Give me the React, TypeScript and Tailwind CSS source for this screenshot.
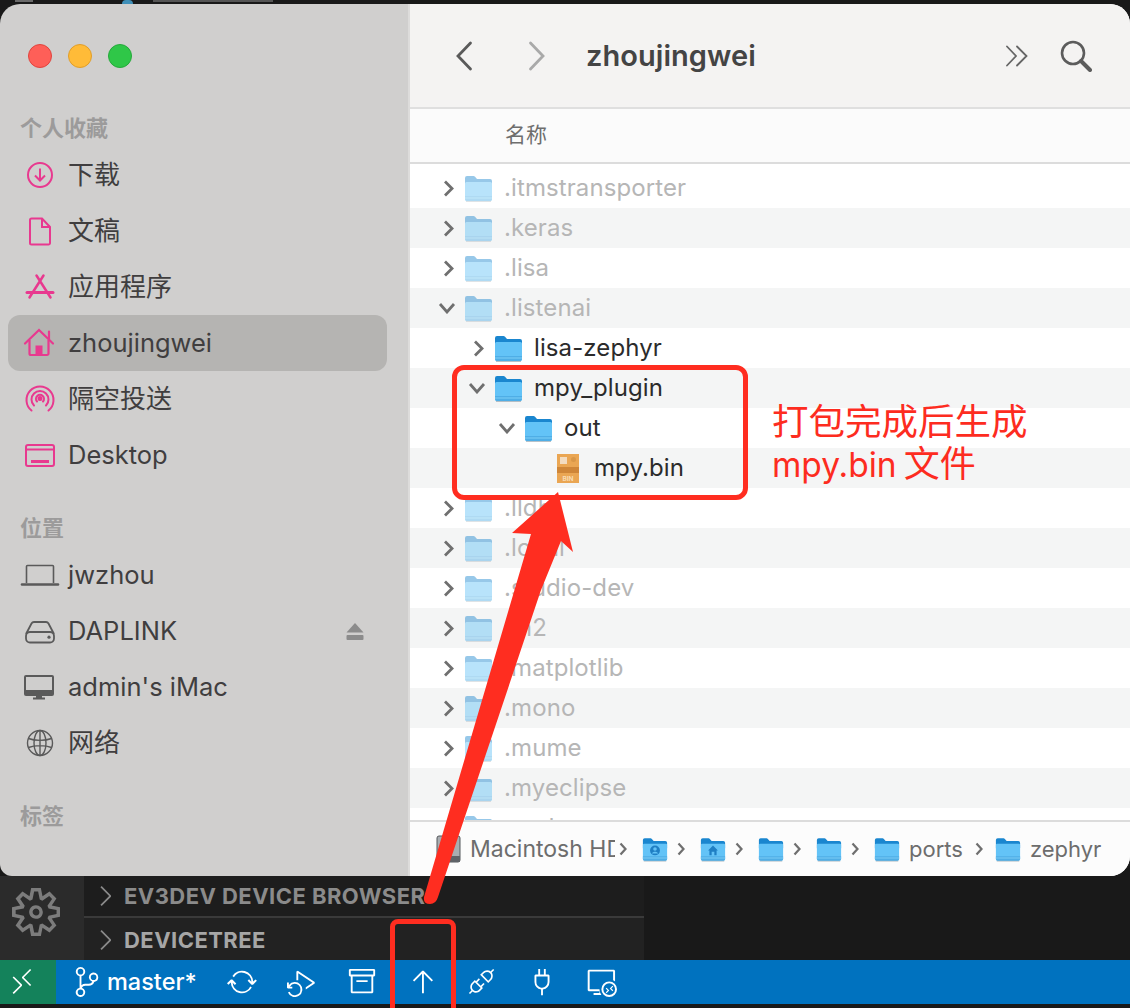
import React from "react";
import {
  VscArchive,
  VscArrowUp,
  VscChevronRight,
  VscDebugDisconnect,
  VscDebugRerun,
  VscPlug,
  VscRemote,
  VscRemoteExplorer,
  VscSettingsGear,
  VscSourceControl,
  VscSync,
} from "react-icons/vsc";

type Glyph = "user" | "home";

function Folder({ faded, small, glyph }: { faded?: boolean; small?: boolean; glyph?: Glyph }) {
  return (
    <svg
      viewBox="0 0 29 27"
      className={`${small ? "w-[26px] h-[25px]" : "w-[29px] h-[27px]"} shrink-0 ${faded ? "opacity-45" : ""}`}
    >
      <path d="M1 3a2 2 0 0 1 2-2h6.500a2 2 0 0 1 1.500.7L13 4h13a2 2 0 0 1 2 2v6H1z" fill="#1a86cf" />
      <path d="M1 8.500a1.500 1.500 0 0 1 1.500-1.500h24a1.500 1.500 0 0 1 1.500 1.500V24a2 2 0 0 1-2 2H3a2 2 0 0 1-2-2z" fill="#63c3f7" />
      <path d="M1 21h27v3a2 2 0 0 1-2 2H3a2 2 0 0 1-2-2z" fill="#4faee6" />
      <path d="M1 23h27" stroke="#7fd0f8" strokeWidth="1" />
      <path d="M2 26.500h25" stroke="#8a9aa6" strokeWidth="1" opacity="0.6" />
      {glyph === "user" && (
        <g fill="#1f7fc4">
          <circle cx="14.500" cy="14.500" r="5.500" />
          <circle cx="14.500" cy="13" r="2" fill="#63c3f7" />
          <path d="M11 18c1-2.500 6-2.500 7 0z" fill="#63c3f7" />
        </g>
      )}
      {glyph === "home" && <path d="M14.500 9 L20 14.500 H18.500 V20 H16 V16 H13 V20 H10.500 V14.500 H9z" fill="#1f7fc4" />}
    </svg>
  );
}

function BinFile() {
  return (
    <svg viewBox="0 0 22 29" className="w-[22px] h-[29px] shrink-0">
      <rect width="22" height="29" fill="#eaa653" />
      <rect y="13" width="22" height="6" fill="#cf8638" />
      <rect x="3" y="3" width="7" height="7" fill="#f3dcc0" />
      <circle cx="16.500" cy="5.500" r="2.500" fill="#d99748" />
      <text x="11" y="26.500" textAnchor="middle" fontSize="6.500" fontWeight="700" fill="#f8dcb4">
        BIN
      </text>
    </svg>
  );
}

function RowChevron({ open }: { open?: boolean }) {
  return open ? (
    <svg viewBox="0 0 18 12" className="w-[18px] h-[12px] -ml-[5px] mr-[8px] shrink-0">
      <path d="M2 2l7 8 7-8" fill="none" stroke="#6f6f6f" strokeWidth="2.800" />
    </svg>
  ) : (
    <svg viewBox="0 0 11 17" className="w-[11px] h-[17px] mr-[10px] shrink-0">
      <path d="M2 1.500l7 7-7 7" fill="none" stroke="#6f6f6f" strokeWidth="2.800" />
    </svg>
  );
}

type Row = { name: string; level: 0 | 1 | 2 | 3; open?: boolean; faded?: boolean };

const rows: Row[] = [
  { name: ".itmstransporter", level: 0, faded: true },
  { name: ".keras", level: 0, faded: true },
  { name: ".lisa", level: 0, faded: true },
  { name: ".listenai", level: 0, open: true, faded: true },
  { name: "lisa-zephyr", level: 1 },
  { name: "mpy_plugin", level: 1, open: true },
  { name: "out", level: 2, open: true },
  { name: "mpy.bin", level: 3 },
  { name: ".lldb", level: 0, faded: true },
  { name: ".local", level: 0, faded: true },
  { name: ".studio-dev", level: 0, faded: true },
  { name: ".m2", level: 0, faded: true },
  { name: ".matplotlib", level: 0, faded: true },
  { name: ".mono", level: 0, faded: true },
  { name: ".mume", level: 0, faded: true },
  { name: ".myeclipse", level: 0, faded: true },
  { name: ".node-gyp", level: 0, faded: true },
];

const indent = ["pl-[33px]", "pl-[63px]", "pl-[93px]", "pl-[147px]"];

function FileRow({ row, odd }: { row: Row; odd: boolean }) {
  return (
    <div className={`h-10 shrink-0 flex items-center ${indent[row.level]} ${odd ? "bg-[#f4f5f5]" : "bg-white"}`}>
      {row.level === 3 ? <BinFile /> : <RowChevron open={row.open} />}
      {row.level !== 3 && <Folder faded={row.faded} />}
      <span
        className={`${row.level === 3 ? "ml-[15px]" : "ml-[11px]"} text-[24px] tracking-[0.1px] leading-none whitespace-nowrap ${
          row.faded ? "text-[#b6b6b6]" : "text-[#2b2b2b]"
        }`}
      >
        {row.name}
      </span>
    </div>
  );
}

const pink = "#e8398f";
const gray = "#5a5a5a";

const sideIcons: Record<string, React.ReactNode> = {
  download: (
    <g fill="none" stroke={pink} strokeWidth="2">
      <circle cx="18" cy="18" r="12" />
      <path d="M18 11.500V23.500M13 18.500l5 5 5-5" />
    </g>
  ),
  doc: (
    <g fill="none" stroke={pink} strokeWidth="2">
      <path d="M9.500 5.500h10.500l8 8.500v16a1.500 1.500 0 0 1-1.500 1.500h-17a1.500 1.500 0 0 1-1.500-1.500v-23a1.500 1.500 0 0 1 1.500-1.500z" />
      <path d="M20 5.500v8.500h8" />
    </g>
  ),
  apps: (
    <g fill="none" stroke={pink} strokeLinecap="round">
      <path d="M14.500 6.500 28.500 28.500M21.500 6.500 7.500 28.500" strokeWidth="2.500" />
      <path d="M5 23.500h26" strokeWidth="3" />
    </g>
  ),
  home: (
    <g>
      <path d="M3 18.500 17 5l14 13.500M27 6.500v8" fill="none" stroke={pink} strokeWidth="2.200" strokeLinecap="round" />
      <path d="M7.500 15v13.500a1.500 1.500 0 0 0 1.500 1.500h16a1.500 1.500 0 0 0 1.500-1.500V15" fill="none" stroke={pink} strokeWidth="2.200" />
      <rect x="13.500" y="20.500" width="7" height="10" fill={pink} />
    </g>
  ),
  airdrop: (
    <g fill="none" stroke={pink} strokeWidth="2" strokeLinecap="round">
      <path d="M9.500 29.500a13.500 13.500 0 1 1 17 0" />
      <path d="M12 24.500a8.500 8.500 0 1 1 12 0" />
      <path d="M15 20.500a4 4 0 1 1 6 0" />
      <circle cx="18" cy="17.500" r="1.500" fill={pink} />
    </g>
  ),
  desktop: (
    <g fill="none" stroke={pink} strokeWidth="2">
      <rect x="4" y="8" width="28" height="21" rx="2" />
      <path d="M4 12.500h28" />
      <rect x="9" y="23" width="18" height="3" fill={pink} stroke="none" />
    </g>
  ),
  laptop: (
    <g fill="none" stroke={gray}>
      <path d="M4.500 26V9.500a1 1 0 0 1 1-1h25a1 1 0 0 1 1 1V26" strokeWidth="1.600" />
      <path d="M0 27.500h36" strokeWidth="2.600" strokeLinecap="round" />
    </g>
  ),
  drive: (
    <g fill="none" stroke={gray} strokeWidth="1.800">
      <path d="M4 21 9.500 10.500a3 3 0 0 1 2.500-1.500h12a3 3 0 0 1 2.500 1.500L32 21" />
      <rect x="4" y="19" width="28" height="10.500" rx="4" />
      <circle cx="27" cy="24.200" r="1.600" fill={gray} stroke="none" />
    </g>
  ),
  imac: (
    <g>
      <rect x="2" y="6" width="30" height="21" rx="2" fill={gray} />
      <rect x="4" y="8" width="26" height="13" fill="#cfcecd" />
      <rect x="14" y="27" width="6" height="2.500" fill={gray} />
      <rect x="11" y="28.500" width="12" height="2" fill={gray} />
    </g>
  ),
  globe: (
    <g fill="none" stroke={gray} strokeWidth="1.400">
      <circle cx="18" cy="18" r="12.500" />
      <ellipse cx="18" cy="18" rx="6" ry="12.500" />
      <path d="M6.500 13.500c6 2.500 17 2.500 23 0M6.500 22.500c6-2.500 17-2.500 23 0M18 5.500v25" />
    </g>
  ),
};

function SideItem({
  icon,
  label,
  selected,
  eject,
  cjk,
}: {
  icon: string;
  label: string;
  selected?: boolean;
  eject?: boolean;
  cjk?: boolean;
}) {
  return (
    <div className={`h-14 ml-2 mr-[21px] pl-[14px] flex items-center rounded-xl ${selected ? "bg-[#b5b4b2]" : ""}`}>
      <svg viewBox="0 0 36 36" className="w-9 h-9 shrink-0 overflow-visible">
        {sideIcons[icon]}
      </svg>
      <span className={`ml-[10px] ${cjk ? "text-[26px]" : "text-[25.5px]"} leading-none text-[#403e3f] whitespace-nowrap`}>
        {label}
      </span>
      {eject && (
        <svg viewBox="0 0 18 17" className="w-[18px] h-[17px] ml-auto mr-[23px]">
          <path d="M9 0l8.500 9.500H.5z" fill="#8c8c8c" />
          <rect x="0.500" y="12" width="17" height="5" rx="1" fill="#8c8c8c" />
        </svg>
      )}
    </div>
  );
}

function SideTitle({ label, className }: { label: string; className: string }) {
  return <div className={`h-8 pl-5 flex items-center text-[22px] font-semibold text-[#9c9b9b] ${className}`}>{label}</div>;
}

function Sidebar() {
  return (
    <aside className="w-[410px] shrink-0 flex flex-col bg-[#d0cfce] border-r-2 border-[#dddcdb]">
      <div className="mt-10 pl-7 flex gap-4">
        <div className="w-6 h-6 rounded-full bg-[#fe5f58] border border-[#e0443e]" />
        <div className="w-6 h-6 rounded-full bg-[#ffbb38] border border-[#e09e2a]" />
        <div className="w-6 h-6 rounded-full bg-[#2fc748] border border-[#25a93b]" />
      </div>
      <SideTitle label="个人收藏" className="mt-11" />
      <div className="mt-[3px]">
        <SideItem icon="download" label="下载" cjk />
        <SideItem icon="doc" label="文稿" cjk />
        <SideItem icon="apps" label="应用程序" cjk />
        <SideItem icon="home" label="zhoujingwei" selected />
        <SideItem icon="airdrop" label="隔空投送" cjk />
        <SideItem icon="desktop" label="Desktop" />
      </div>
      <SideTitle label="位置" className="mt-[29px]" />
      <div className="mt-[3px]">
        <SideItem icon="laptop" label="jwzhou" />
        <SideItem icon="drive" label="DAPLINK" eject />
        <SideItem icon="imac" label="admin's iMac" />
        <SideItem icon="globe" label="网络" cjk />
      </div>
      <SideTitle label="标签" className="mt-[29px]" />
    </aside>
  );
}

function Crumb() {
  return (
    <svg viewBox="0 0 8 14" className="w-2 h-[14px] shrink-0">
      <path d="M1.500 1.500 6.500 7l-5 5.500" fill="none" stroke="#6f6f6f" strokeWidth="2.200" />
    </svg>
  );
}

function PathFolder({ glyph }: { glyph?: Glyph }) {
  return (
    <div className="w-[58px] shrink-0 flex items-center">
      <Folder small glyph={glyph} />
      <div className="ml-[9px]">
        <Crumb />
      </div>
    </div>
  );
}

function PathBar() {
  return (
    <div className="h-14 shrink-0 pl-[26px] flex items-center bg-[#fcfcfc] border-t-2 border-[#dcdcdc] text-[22px] text-[#6d6d6d]">
      <svg viewBox="0 0 25 28" className="w-[25px] h-[28px] shrink-0">
        <rect x="1" y="1" width="23" height="26" rx="2" fill="#a9adb1" stroke="#55585c" />
        <path d="M5 17 18 4l2 2L7 19z" fill="#e4e6e8" />
        <rect x="1" y="21" width="23" height="6" fill="#5f6368" />
      </svg>
      <span className="ml-[9px] w-[145px] overflow-hidden whitespace-nowrap text-[23px]">Macintosh HD</span>
      <div className="ml-1 mr-[15px]">
        <Crumb />
      </div>
      <PathFolder glyph="user" />
      <PathFolder glyph="home" />
      <PathFolder />
      <PathFolder />
      <Folder small />
      <span className="ml-[9px]">ports</span>
      <div className="ml-3 mr-3">
        <Crumb />
      </div>
      <Folder small />
      <span className="ml-[9px]">zephyr</span>
    </div>
  );
}

function FilePane() {
  return (
    <section className="flex-1 min-w-0 flex flex-col bg-white">
      <header className="h-[105px] shrink-0 pl-[45px] pr-[38px] flex items-center bg-[#f4f3f2] border-b-2 border-[#dfdfdf]">
        <svg viewBox="0 0 18 30" className="w-[18px] h-[30px] shrink-0">
          <path d="M15.500 2 3 15l12.500 13" fill="none" stroke="#5a5a5a" strokeWidth="2.800" strokeLinecap="round" />
        </svg>
        <svg viewBox="0 0 18 30" className="w-[18px] h-[30px] ml-[55px] shrink-0">
          <path d="M2.500 2 15 15 2.500 28" fill="none" stroke="#a9a9a9" strokeWidth="2.800" strokeLinecap="round" />
        </svg>
        <h1 className="ml-10 text-[29px] font-semibold text-[#444444] tracking-[0.05px]">zhoujingwei</h1>
        <svg viewBox="0 0 24 24" className="w-6 h-6 ml-auto mr-[-1px] shrink-0">
          <path d="M2 2.500 11 12l-9 9.500M12 2.500 21.500 12 12 21.500" fill="none" stroke="#666666" strokeWidth="1.800" strokeLinecap="round" />
        </svg>
        <svg viewBox="0 0 32 32" className="w-8 h-8 ml-8 shrink-0">
          <circle cx="13" cy="13" r="11" fill="none" stroke="#5c5c5c" strokeWidth="2.600" />
          <path d="M21 21l9 9" stroke="#5c5c5c" strokeWidth="4" strokeLinecap="round" />
        </svg>
      </header>
      <div className="h-[55px] shrink-0 pl-[95px] pb-[2px] flex items-center bg-[#fbfbfb] border-b-2 border-[#dcdcdc] text-[21px] text-[#6e6e6e]">
        名称
      </div>
      <div className="flex-1 min-h-0 pt-1 overflow-hidden">
        {rows.map((row, i) => (
          <FileRow key={row.name} row={row} odd={i % 2 === 1} />
        ))}
      </div>
      <PathBar />
    </section>
  );
}

function PanelRow({ label, className }: { label: string; className: string }) {
  return (
    <div className={`flex items-center font-bold text-[22px] tracking-[0.45px] leading-none ${className}`}>
      <VscChevronRight size={32} className="ml-[5px] mr-[3px] text-[#8a8a8a] shrink-0" />
      {label}
    </div>
  );
}

function StatusIcon({ children }: { children: React.ReactNode }) {
  return <div className="w-[60px] shrink-0 flex justify-center">{children}</div>;
}

function StatusBar() {
  return (
    <footer className="h-11 shrink-0 flex items-center text-white bg-[#0072bf]">
      <div className="w-14 h-full shrink-0 pr-3 flex items-center justify-center bg-[#14825b]">
        <VscRemote size={30} />
      </div>
      <div className="w-[156px] shrink-0 pl-4 flex items-center">
        <VscSourceControl size={30} className="shrink-0" />
        <span className="ml-[5px] text-[23.5px] font-medium">master*</span>
      </div>
      <StatusIcon><VscSync size={30} /></StatusIcon>
      <StatusIcon><VscDebugRerun size={30} /></StatusIcon>
      <StatusIcon><VscArchive size={30} /></StatusIcon>
      <StatusIcon><VscArrowUp size={30} /></StatusIcon>
      <StatusIcon><VscDebugDisconnect size={30} /></StatusIcon>
      <StatusIcon><VscPlug size={30} /></StatusIcon>
      <StatusIcon><VscRemoteExplorer size={30} /></StatusIcon>
    </footer>
  );
}

function Annotations() {
  return (
    <>
      <div className="absolute left-[452px] top-[365px] w-[296px] h-[135px] rounded-xl border-[5px] border-[#ff2d20]" />
      <div className="absolute left-[772px] top-[401px] text-[36.5px] leading-[42px] text-[#fd2c1f] whitespace-nowrap">
        <div>打包完成后生成</div>
        <div className="flex items-baseline">
          <span className="text-[33.5px]">mpy.bin</span>
          <span className="ml-[7px] text-[36px]">文件</span>
        </div>
      </div>
      <svg viewBox="420 488 160 420" className="absolute left-[420px] top-[488px] w-40 h-[420px]">
        <path
          d="M558 492 512 533 531 534 424 897Q423 904 430 904Q436 904 438 897L541 590 561 541 573 552z"
          fill="#ff2d20"
        />
      </svg>
      <div className="absolute left-[390px] top-[919px] w-[66px] h-[100px] rounded-lg border-[5px] border-[#ff2d20]" />
    </>
  );
}

export default function App() {
  return (
    <div className="relative w-[1130px] h-[1008px] overflow-hidden bg-[#191919] font-['Inter','Noto_Sans_CJK_SC',sans-serif]">
      <div className="h-1 flex items-start overflow-hidden">
        <div className="ml-[15px] w-[18px] h-[2px] bg-[#6a6a6a]" />
        <div className="ml-[89px] w-[11px] h-1 rounded-t-full bg-[#3f8fb8]" />
        <div className="ml-[20px] w-[120px] h-[2px] bg-[#555555]" />
      </div>
      <main className="h-[872px] flex rounded-[20px] rounded-bl-xl overflow-hidden">
        <Sidebar />
        <FilePane />
      </main>
      <div className="h-[84px] flex">
        <div className="w-[84px] shrink-0 pl-3 pb-[12px] flex items-center bg-[#2b2b2b]">
          <VscSettingsGear size={48} className="text-[#7c7c7c]" />
        </div>
        <div className="w-[560px] shrink-0 flex flex-col">
          <PanelRow label="EV3DEV DEVICE BROWSER" className="h-10 bg-[#1d1d1d] text-[#8b8b8b] border-b-2 border-[#3a3a3a] box-content" />
          <PanelRow label="DEVICETREE" className="flex-1 pt-[2px] bg-[#222222] text-[#a6a6a6]" />
        </div>
      </div>
      <StatusBar />
      <Annotations />
    </div>
  );
}
